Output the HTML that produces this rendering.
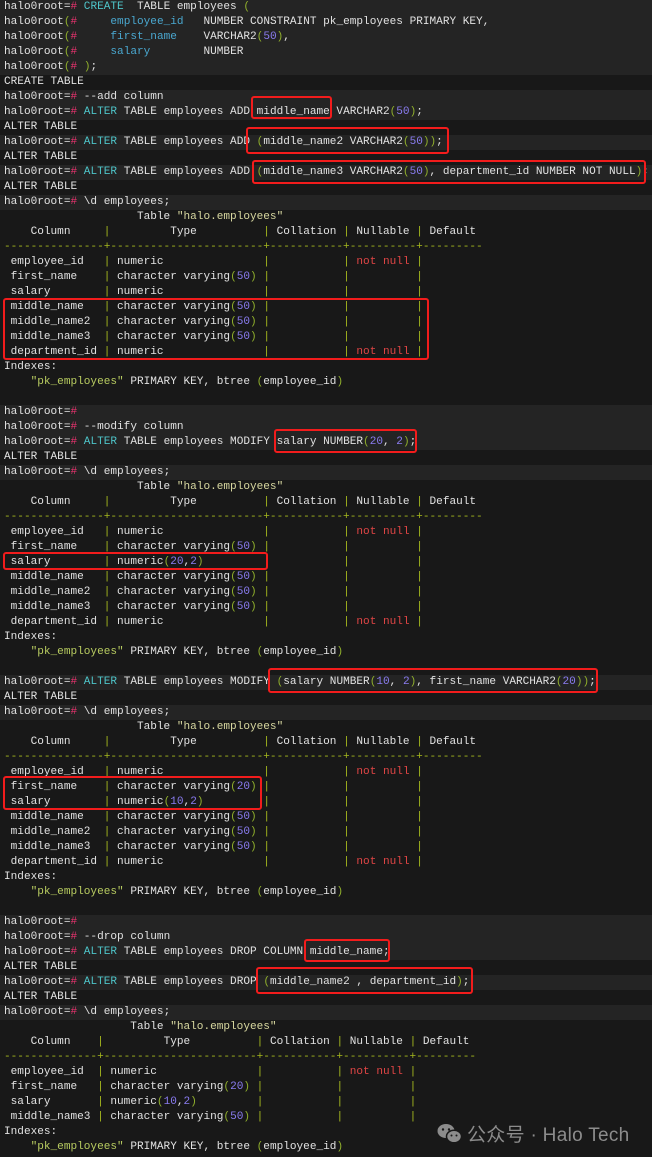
<!DOCTYPE html>
<html><head><meta charset="utf-8"><style>
html,body{margin:0;padding:0;background:#181818;width:652px;height:1157px;overflow:hidden}
#t{position:absolute;left:0;top:0px;width:652px;font-family:"Liberation Mono",monospace;font-size:11.08px;color:#e2e2e2}
.l{height:15px;line-height:15px;white-space:pre;padding-left:4px}
.p{background:#242424}
.h{color:#e8336e}.k{color:#4ec4c8}.c{color:#4aa8d0}.g{color:#8fae2c}.n{color:#8a7cf0}.y{color:#a5b81e}.r{color:#e04545}.s{color:#d8d8a0}.q{color:#b8cc60}
.b{position:absolute;border:2.5px solid #f21c1c;border-radius:3px;box-sizing:border-box}
#wm{position:absolute;left:437px;top:1120px;font-family:"Liberation Sans","Noto Sans CJK SC",sans-serif;font-size:19px;color:#8c8c8c;white-space:nowrap;letter-spacing:0.3px}
</style></head><body>
<div id="t">
<div class="l p">halo0root=<span class="h">#</span> <span class="k">CREATE</span>  TABLE employees <span class="g">(</span></div>
<div class="l p">halo0root<span class="g">(</span><span class="h">#</span>     <span class="c">employee_id</span>   NUMBER CONSTRAINT pk_employees PRIMARY KEY,</div>
<div class="l p">halo0root<span class="g">(</span><span class="h">#</span>     <span class="c">first_name</span>    VARCHAR2<span class="g">(</span><span class="n">50</span><span class="g">)</span>,</div>
<div class="l p">halo0root<span class="g">(</span><span class="h">#</span>     <span class="c">salary</span>        NUMBER</div>
<div class="l p">halo0root<span class="g">(</span><span class="h">#</span> <span class="g">)</span>;</div>
<div class="l">CREATE TABLE</div>
<div class="l p">halo0root=<span class="h">#</span> --add column</div>
<div class="l p">halo0root=<span class="h">#</span> <span class="k">ALTER</span> TABLE employees ADD middle_name VARCHAR2<span class="g">(</span><span class="n">50</span><span class="g">)</span>;</div>
<div class="l">ALTER TABLE</div>
<div class="l p">halo0root=<span class="h">#</span> <span class="k">ALTER</span> TABLE employees ADD <span class="g">(</span>middle_name2 VARCHAR2<span class="g">(</span><span class="n">50</span><span class="g">))</span>;</div>
<div class="l">ALTER TABLE</div>
<div class="l p">halo0root=<span class="h">#</span> <span class="k">ALTER</span> TABLE employees ADD <span class="g">(</span>middle_name3 VARCHAR2<span class="g">(</span><span class="n">50</span><span class="g">)</span>, department_id NUMBER NOT NULL<span class="g">)</span>;</div>
<div class="l">ALTER TABLE</div>
<div class="l p">halo0root=<span class="h">#</span> \d employees;</div>
<div class="l">                    Table <span class="s">"halo.employees"</span></div>
<div class="l">    Column     <span class="y">|</span>         Type          <span class="y">|</span> Collation <span class="y">|</span> Nullable <span class="y">|</span> Default</div>
<div class="l y">---------------+-----------------------+-----------+----------+---------</div>
<div class="l"> employee_id   <span class="y">|</span> numeric               <span class="y">|</span>           <span class="y">|</span> <span class="r">not null</span> <span class="y">|</span></div>
<div class="l"> first_name    <span class="y">|</span> character varying<span class="g">(</span><span class="n">50</span><span class="g">)</span> <span class="y">|</span>           <span class="y">|</span>          <span class="y">|</span></div>
<div class="l"> salary        <span class="y">|</span> numeric               <span class="y">|</span>           <span class="y">|</span>          <span class="y">|</span></div>
<div class="l"> middle_name   <span class="y">|</span> character varying<span class="g">(</span><span class="n">50</span><span class="g">)</span> <span class="y">|</span>           <span class="y">|</span>          <span class="y">|</span></div>
<div class="l"> middle_name2  <span class="y">|</span> character varying<span class="g">(</span><span class="n">50</span><span class="g">)</span> <span class="y">|</span>           <span class="y">|</span>          <span class="y">|</span></div>
<div class="l"> middle_name3  <span class="y">|</span> character varying<span class="g">(</span><span class="n">50</span><span class="g">)</span> <span class="y">|</span>           <span class="y">|</span>          <span class="y">|</span></div>
<div class="l"> department_id <span class="y">|</span> numeric               <span class="y">|</span>           <span class="y">|</span> <span class="r">not null</span> <span class="y">|</span></div>
<div class="l">Indexes:</div>
<div class="l">    <span class="q">"pk_employees"</span> PRIMARY KEY, btree <span class="g">(</span>employee_id<span class="g">)</span></div>
<div class="l"> </div>
<div class="l p">halo0root=<span class="h">#</span></div>
<div class="l p">halo0root=<span class="h">#</span> --modify column</div>
<div class="l p">halo0root=<span class="h">#</span> <span class="k">ALTER</span> TABLE employees MODIFY salary NUMBER<span class="g">(</span><span class="n">20</span>, <span class="n">2</span><span class="g">)</span>;</div>
<div class="l">ALTER TABLE</div>
<div class="l p">halo0root=<span class="h">#</span> \d employees;</div>
<div class="l">                    Table <span class="s">"halo.employees"</span></div>
<div class="l">    Column     <span class="y">|</span>         Type          <span class="y">|</span> Collation <span class="y">|</span> Nullable <span class="y">|</span> Default</div>
<div class="l y">---------------+-----------------------+-----------+----------+---------</div>
<div class="l"> employee_id   <span class="y">|</span> numeric               <span class="y">|</span>           <span class="y">|</span> <span class="r">not null</span> <span class="y">|</span></div>
<div class="l"> first_name    <span class="y">|</span> character varying<span class="g">(</span><span class="n">50</span><span class="g">)</span> <span class="y">|</span>           <span class="y">|</span>          <span class="y">|</span></div>
<div class="l"> salary        <span class="y">|</span> numeric<span class="g">(</span><span class="n">20</span>,<span class="n">2</span><span class="g">)</span>         <span class="y">|</span>           <span class="y">|</span>          <span class="y">|</span></div>
<div class="l"> middle_name   <span class="y">|</span> character varying<span class="g">(</span><span class="n">50</span><span class="g">)</span> <span class="y">|</span>           <span class="y">|</span>          <span class="y">|</span></div>
<div class="l"> middle_name2  <span class="y">|</span> character varying<span class="g">(</span><span class="n">50</span><span class="g">)</span> <span class="y">|</span>           <span class="y">|</span>          <span class="y">|</span></div>
<div class="l"> middle_name3  <span class="y">|</span> character varying<span class="g">(</span><span class="n">50</span><span class="g">)</span> <span class="y">|</span>           <span class="y">|</span>          <span class="y">|</span></div>
<div class="l"> department_id <span class="y">|</span> numeric               <span class="y">|</span>           <span class="y">|</span> <span class="r">not null</span> <span class="y">|</span></div>
<div class="l">Indexes:</div>
<div class="l">    <span class="q">"pk_employees"</span> PRIMARY KEY, btree <span class="g">(</span>employee_id<span class="g">)</span></div>
<div class="l"> </div>
<div class="l p">halo0root=<span class="h">#</span> <span class="k">ALTER</span> TABLE employees MODIFY <span class="g">(</span>salary NUMBER<span class="g">(</span><span class="n">10</span>, <span class="n">2</span><span class="g">)</span>, first_name VARCHAR2<span class="g">(</span><span class="n">20</span><span class="g">))</span>;</div>
<div class="l">ALTER TABLE</div>
<div class="l p">halo0root=<span class="h">#</span> \d employees;</div>
<div class="l">                    Table <span class="s">"halo.employees"</span></div>
<div class="l">    Column     <span class="y">|</span>         Type          <span class="y">|</span> Collation <span class="y">|</span> Nullable <span class="y">|</span> Default</div>
<div class="l y">---------------+-----------------------+-----------+----------+---------</div>
<div class="l"> employee_id   <span class="y">|</span> numeric               <span class="y">|</span>           <span class="y">|</span> <span class="r">not null</span> <span class="y">|</span></div>
<div class="l"> first_name    <span class="y">|</span> character varying<span class="g">(</span><span class="n">20</span><span class="g">)</span> <span class="y">|</span>           <span class="y">|</span>          <span class="y">|</span></div>
<div class="l"> salary        <span class="y">|</span> numeric<span class="g">(</span><span class="n">10</span>,<span class="n">2</span><span class="g">)</span>         <span class="y">|</span>           <span class="y">|</span>          <span class="y">|</span></div>
<div class="l"> middle_name   <span class="y">|</span> character varying<span class="g">(</span><span class="n">50</span><span class="g">)</span> <span class="y">|</span>           <span class="y">|</span>          <span class="y">|</span></div>
<div class="l"> middle_name2  <span class="y">|</span> character varying<span class="g">(</span><span class="n">50</span><span class="g">)</span> <span class="y">|</span>           <span class="y">|</span>          <span class="y">|</span></div>
<div class="l"> middle_name3  <span class="y">|</span> character varying<span class="g">(</span><span class="n">50</span><span class="g">)</span> <span class="y">|</span>           <span class="y">|</span>          <span class="y">|</span></div>
<div class="l"> department_id <span class="y">|</span> numeric               <span class="y">|</span>           <span class="y">|</span> <span class="r">not null</span> <span class="y">|</span></div>
<div class="l">Indexes:</div>
<div class="l">    <span class="q">"pk_employees"</span> PRIMARY KEY, btree <span class="g">(</span>employee_id<span class="g">)</span></div>
<div class="l"> </div>
<div class="l p">halo0root=<span class="h">#</span></div>
<div class="l p">halo0root=<span class="h">#</span> --drop column</div>
<div class="l p">halo0root=<span class="h">#</span> <span class="k">ALTER</span> TABLE employees DROP COLUMN middle_name;</div>
<div class="l">ALTER TABLE</div>
<div class="l p">halo0root=<span class="h">#</span> <span class="k">ALTER</span> TABLE employees DROP <span class="g">(</span>middle_name2 , department_id<span class="g">)</span>;</div>
<div class="l">ALTER TABLE</div>
<div class="l p">halo0root=<span class="h">#</span> \d employees;</div>
<div class="l">                   Table <span class="s">"halo.employees"</span></div>
<div class="l">    Column    <span class="y">|</span>         Type          <span class="y">|</span> Collation <span class="y">|</span> Nullable <span class="y">|</span> Default</div>
<div class="l y">--------------+-----------------------+-----------+----------+---------</div>
<div class="l"> employee_id  <span class="y">|</span> numeric               <span class="y">|</span>           <span class="y">|</span> <span class="r">not null</span> <span class="y">|</span></div>
<div class="l"> first_name   <span class="y">|</span> character varying<span class="g">(</span><span class="n">20</span><span class="g">)</span> <span class="y">|</span>           <span class="y">|</span>          <span class="y">|</span></div>
<div class="l"> salary       <span class="y">|</span> numeric<span class="g">(</span><span class="n">10</span>,<span class="n">2</span><span class="g">)</span>         <span class="y">|</span>           <span class="y">|</span>          <span class="y">|</span></div>
<div class="l"> middle_name3 <span class="y">|</span> character varying<span class="g">(</span><span class="n">50</span><span class="g">)</span> <span class="y">|</span>           <span class="y">|</span>          <span class="y">|</span></div>
<div class="l">Indexes:</div>
<div class="l">    <span class="q">"pk_employees"</span> PRIMARY KEY, btree <span class="g">(</span>employee_id<span class="g">)</span></div>
</div>
<div class="b" style="left:251px;top:96px;width:81px;height:23px"></div>
<div class="b" style="left:246px;top:127px;width:203px;height:27px"></div>
<div class="b" style="left:252px;top:160px;width:394px;height:24px"></div>
<div class="b" style="left:3px;top:298px;width:426px;height:62px"></div>
<div class="b" style="left:274px;top:429px;width:143px;height:24px"></div>
<div class="b" style="left:3px;top:552px;width:265px;height:18px"></div>
<div class="b" style="left:268px;top:668px;width:330px;height:25px"></div>
<div class="b" style="left:3px;top:776px;width:259px;height:34px"></div>
<div class="b" style="left:304px;top:939px;width:86px;height:23px"></div>
<div class="b" style="left:256px;top:967px;width:217px;height:27px"></div>
<div id="wm"><svg width="26" height="22" viewBox="0 0 26 22" style="vertical-align:-4px;margin-right:4px"><ellipse cx="9" cy="8" rx="8.5" ry="7" fill="#8c8c8c"/><ellipse cx="17" cy="13.5" rx="7.5" ry="6.3" fill="#8c8c8c" stroke="#181818" stroke-width="1.5"/><circle cx="6" cy="6.5" r="1.2" fill="#181818"/><circle cx="12" cy="6.5" r="1.2" fill="#181818"/><circle cx="14.5" cy="12.5" r="1" fill="#181818"/><circle cx="19.5" cy="12.5" r="1" fill="#181818"/></svg>公众号 · Halo Tech</div>
</body></html>
